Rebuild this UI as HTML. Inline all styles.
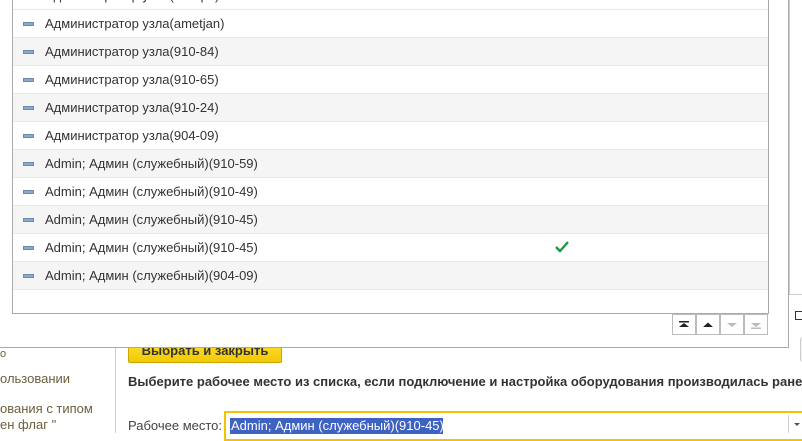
<!DOCTYPE html>
<html><head><meta charset="utf-8"><style>
*{margin:0;padding:0;box-sizing:border-box}
body{width:802px;height:433px;overflow:hidden;background:#fff;font-family:"Liberation Sans",Arial,sans-serif;position:relative;font-size:13px;color:#333}
.abs{position:absolute}
.row{position:absolute;left:13px;width:755px;height:28px;border-bottom:1px solid #e8e8e8;}
.row.g{background:#f5f5f5}
.row .ic{position:absolute;left:10px;top:12px;width:11px;height:4px;background:#8aabd0;border:1px solid #6a8ab2}
.row .t{position:absolute;left:32px;top:6px;font-size:13px;color:#333;white-space:nowrap}
.nb{position:absolute;top:314px;width:24px;height:21px;border:1px solid #bbb;background:#fff}
.side{color:#6b5f3c;font-size:13px;position:absolute;left:0}
</style></head><body>
<div class="abs" style="left:115px;top:348px;width:1px;height:85px;background:#ccc"></div>
<div class="side" style="top:348px;font-size:11px">о</div>
<div class="side" style="top:371px">ользовании</div>
<div class="side" style="top:401px">ования с типом</div>
<div class="side" style="top:417px">ен флаг "</div>
<div class="abs" style="left:128px;top:334px;width:154px;height:29px;background:linear-gradient(#ffe94a,#f2c800);border:1px solid #c7a700;border-radius:2px;font-weight:bold;font-size:13px;color:#333;text-align:center;line-height:32px">Выбрать и закрыть</div>
<div class="abs" style="left:128px;top:374px;font-weight:bold;font-size:13px;color:#333;white-space:nowrap">Выберите рабочее место из списка, если подключение и настройка оборудования производилась ранее</div>
<div class="abs" style="left:128px;top:418px;font-size:13px;color:#444">Рабочее место:</div>
<div class="abs" style="left:224px;top:411px;width:590px;height:30px;border:2px solid #f2c300;background:#fff"></div>
<div class="abs" style="left:788px;top:415px;width:1px;height:18px;background:#ccc"></div>
<div class="abs" style="left:794px;top:423px;width:0;height:0;border-left:3px solid transparent;border-right:3px solid transparent;border-top:3px solid #555"></div>
<div class="abs" style="left:230px;top:418px;width:213px;height:16px;background:#3d62c2;color:#fff;font-size:13px;line-height:16px;padding-left:1px;white-space:nowrap">Admin; Админ (служебный)(910-45)</div>
<div class="abs" style="left:789px;top:0;width:1px;height:294px;background:#ccc"></div>
<div class="abs" style="left:789px;top:294px;width:13px;height:1px;background:#ccc"></div>
<div class="abs" style="left:795px;top:311px;width:9px;height:9px;border:1px solid #333;background:#fff"></div>
<div class="abs" style="left:800px;top:337px;width:10px;height:25px;border:1px solid #ccc;border-radius:3px;background:#f4f4f4"></div>
<div class="abs" style="left:-2px;top:-2px;width:791px;height:350px;background:#fff;border:1px solid #aaa"></div>
<div class="abs" style="left:12px;top:-2px;width:757px;height:316px;border:1px solid #aaa;background:#fff"></div>
<div class="row" style="top:-18px"><div class="ic"></div><div class="t">Администратор узла(Sempo)</div></div>
<div class="row" style="top:10px"><div class="ic"></div><div class="t">Администратор узла(ametjan)</div></div>
<div class="row g" style="top:38px"><div class="ic"></div><div class="t">Администратор узла(910-84)</div></div>
<div class="row" style="top:66px"><div class="ic"></div><div class="t">Администратор узла(910-65)</div></div>
<div class="row g" style="top:94px"><div class="ic"></div><div class="t">Администратор узла(910-24)</div></div>
<div class="row" style="top:122px"><div class="ic"></div><div class="t">Администратор узла(904-09)</div></div>
<div class="row g" style="top:150px"><div class="ic"></div><div class="t">Admin; Админ (служебный)(910-59)</div></div>
<div class="row" style="top:178px"><div class="ic"></div><div class="t">Admin; Админ (служебный)(910-49)</div></div>
<div class="row g" style="top:206px"><div class="ic"></div><div class="t">Admin; Админ (служебный)(910-45)</div></div>
<div class="row" style="top:234px"><div class="ic"></div><div class="t">Admin; Админ (служебный)(910-45)</div>
<svg class="abs" style="left:541px;top:6px" width="16" height="14"><path d="M2 7 L6 11 L14 2" stroke="#1a9a3c" stroke-width="2.4" fill="none"/></svg></div>
<div class="row g" style="top:262px"><div class="ic"></div><div class="t">Admin; Админ (служебный)(904-09)</div></div>
<div class="nb" style="left:672px"><svg width="22" height="19"><rect x="6" y="6" width="10" height="1.5" fill="#222"/><path d="M6 12 L11 8 L16 12Z" fill="#222"/></svg></div>
<div class="nb" style="left:696px"><svg width="22" height="19"><path d="M6 12 L11 7.5 L16 12Z" fill="#222"/></svg></div>
<div class="nb" style="left:720px"><svg width="22" height="19"><path d="M6 8 L11 12 L16 8Z" fill="#bbb"/></svg></div>
<div class="nb" style="left:744px"><svg width="22" height="19"><path d="M6 8 L11 12 L16 8Z" fill="#bbb"/><rect x="6" y="12.5" width="10" height="1.5" fill="#bbb"/></svg></div>
</body></html>
